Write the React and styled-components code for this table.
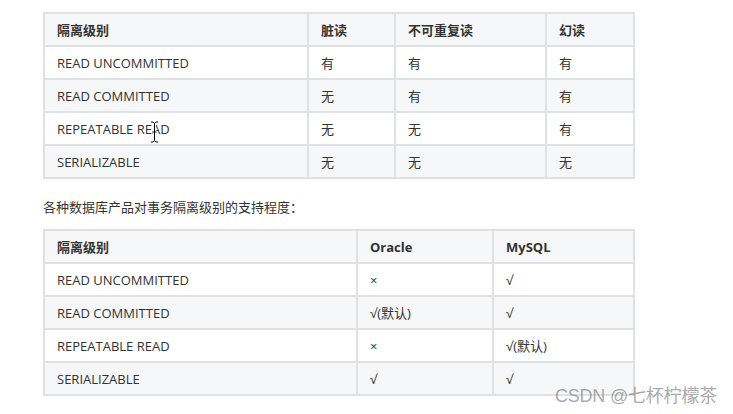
import React from "react"
import styled, { createGlobalStyle } from "styled-components"

const GlobalStyle = createGlobalStyle`
    html, body {
        margin: 0;
        padding: 0;
        background: #ffffff;
    }
    body {
        font-family: "Open Sans", "Noto Sans CJK SC", sans-serif;
        color: #333333;
    }
`

const Page = styled.div`
    position: relative;
    width: 733px;
    height: 414px;
    overflow: hidden;
    padding: 12px 0 0 43px;
    box-sizing: border-box;
`

const Grid = styled.div`
    display: grid;
    grid-template-columns: ${(props) => props.cols};
    grid-auto-rows: 31px;
    gap: 2px;
    padding: 2px;
    width: max-content;
    background-color: #dfe2e5;
`

const Cell = styled.div`
    display: flex;
    align-items: center;
    padding: 0 12px;
    font-size: 13px;
    white-space: nowrap;
    color: #333333;
    background-color: ${(props) => (props.shade ? "#f6f7f8" : "#ffffff")};
    font-weight: ${(props) => (props.head ? 700 : 400)};
`

const Caption = styled.p`
    margin: 0;
    height: 50px;
    box-sizing: border-box;
    padding-top: 19px;
    font-size: 13px;
    line-height: 18px;
    color: #333333;
`

const Watermark = styled.div`
    position: absolute;
    right: 16px;
    bottom: 7px;
    font-family: "Liberation Sans", "Noto Sans CJK SC", sans-serif;
    font-size: 18px;
    color: rgba(120, 120, 120, 0.65);
    letter-spacing: -0.2px;
`

const Cursor = styled.svg`
    position: absolute;
    left: 150px;
    top: 121px;
`

const isoRows = [
    ["READ UNCOMMITTED", "有", "有", "有"],
    ["READ COMMITTED", "无", "有", "有"],
    ["REPEATABLE READ", "无", "无", "有"],
    ["SERIALIZABLE", "无", "无", "无"],
]

const dbRows = [
    ["READ UNCOMMITTED", "×", "√"],
    ["READ COMMITTED", "√(默认)", "√"],
    ["REPEATABLE READ", "×", "√(默认)"],
    ["SERIALIZABLE", "√", "√"],
]

const Table = ({ cols, head, rows }) => (
    <Grid cols={cols}>
        {head.map((h) => (
            <Cell key={h} head shade>{h}</Cell>
        ))}
        {rows.map((row, i) =>
            row.map((c, j) => (
                <Cell key={i + "-" + j} shade={i % 2 === 1}>{c}</Cell>
            ))
        )}
    </Grid>
)

const App = () => {
    return (
        <Page>
            <GlobalStyle />
            <Table
                cols="262px 85px 149px 86px"
                head={["隔离级别", "脏读", "不可重复读", "幻读"]}
                rows={isoRows}
            />
            <Caption>各种数据库产品对事务隔离级别的支持程度：</Caption>
            <Table
                cols="311px 134px 139px"
                head={["隔离级别", "Oracle", "MySQL"]}
                rows={dbRows}
            />
            <Cursor width="9" height="22" viewBox="0 0 9 22">
                <path d="M1 1 H3 L4.5 2.5 L6 1 H8 M4.5 2.5 V19.5 M1 21 H3 L4.5 19.5 L6 21 H8 M2.5 11 H6.5"
                    fill="none" stroke="#fff" strokeWidth="3" />
                <path d="M1 1 H3 L4.5 2.5 L6 1 H8 M4.5 2.5 V19.5 M1 21 H3 L4.5 19.5 L6 21 H8 M2.5 11 H6.5"
                    fill="none" stroke="#000" strokeWidth="1" />
            </Cursor>
            <Watermark>CSDN @七杯柠檬茶</Watermark>
        </Page>
    )
}

export default App
